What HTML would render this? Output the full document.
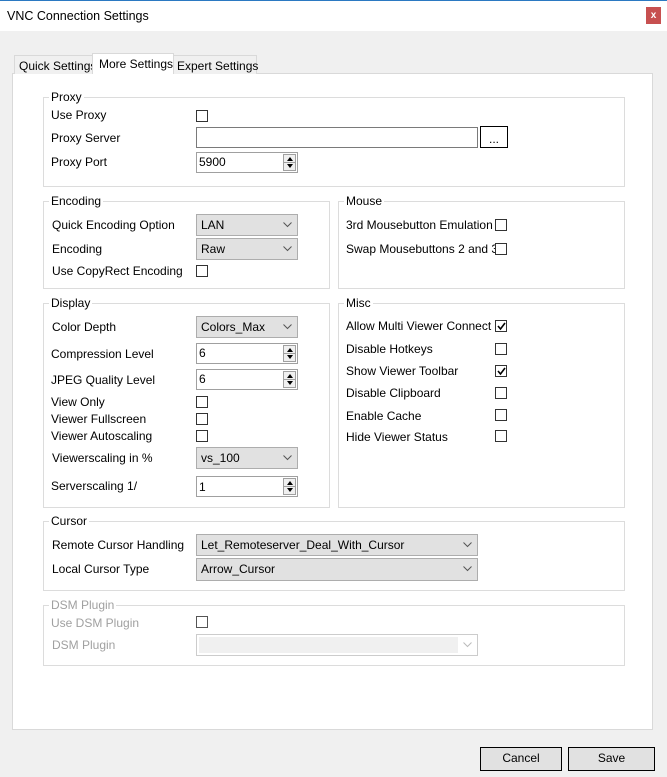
<!DOCTYPE html><html><head><style>
*{box-sizing:border-box;margin:0;padding:0}
body{width:667px;height:777px;background:#f0f0f0;font:12px "Liberation Sans",sans-serif;color:#000;position:relative;overflow:hidden}
.a{position:absolute}
.t{position:absolute;white-space:nowrap;line-height:14px}
.g{position:absolute;border:1px solid #dcdcdc}
.gl{position:absolute;background:#fff;padding:0 2px;line-height:14px;top:-8px;left:5px}
.cb{position:absolute;width:12px;height:12px;border:1px solid #333;background:#fff}
.cb svg{position:absolute;left:0;top:0}
.cmb{position:absolute;background:#e1e1e1;border:1px solid #adadad;padding:3px 0 0 4px;line-height:14px}
.cmb svg{position:absolute;right:5px;top:7px}
.sp{position:absolute;background:#fff;border:1px solid #a0a0a0;padding:2px 0 0 2px;line-height:14px}
.sp i{position:absolute;right:1px;top:1px;width:13px;height:17px;border:1px solid #a0a0a0;background:#f0f0f0}
.sp i:before{content:"";position:absolute;left:3px;top:2px;border:3px solid transparent;border-top:0;border-bottom:4px solid #000}
.sp i:after{content:"";position:absolute;left:3px;top:9px;border:3px solid transparent;border-bottom:0;border-top:4px solid #000}
.sp i b{position:absolute;left:0;right:0;top:7px;border-top:1px solid #a0a0a0}
.btn{position:absolute;border:1px solid #000;background:#e1e1e1;text-align:center;line-height:21px}
.dis{color:#a0a0a0}
</style></head><body>
<div class="a" style="left:0;top:0;width:667px;height:1px;background:#2b79c2"></div>
<div class="a" style="left:0;top:1px;width:667px;height:30px;background:#fff"></div>
<div class="t" style="left:7px;top:9px;font-size:12.5px">VNC Connection Settings</div>
<div class="a" style="left:646px;top:7px;width:15px;height:17px;background:#c75050;color:#fff;font-size:10px;font-weight:bold;text-align:center;line-height:17px">x</div>

<div class="a" style="left:12px;top:73px;width:641px;height:657px;background:#fff;border:1px solid #d9d9d9"></div>
<div class="a" style="left:14px;top:55px;width:79px;height:19px;background:#f0f0f0;border:1px solid #d9d9d9;border-bottom:0"></div>
<div class="t" style="left:19px;top:59px">Quick Settings</div>
<div class="a" style="left:92px;top:53px;width:82px;height:21px;background:#fff;border:1px solid #d9d9d9;border-bottom:0"></div>
<div class="t" style="left:99px;top:57px">More Settings</div>
<div class="a" style="left:173px;top:55px;width:84px;height:19px;background:#f0f0f0;border:1px solid #d9d9d9;border-bottom:0"></div>
<div class="t" style="left:177px;top:59px">Expert Settings</div>

<!-- Proxy -->
<div class="g" style="left:43px;top:97px;width:582px;height:90px"><span class="gl">Proxy</span></div>
<div class="t" style="left:51px;top:108px">Use Proxy</div><div class="cb" style="left:196px;top:110px"></div>
<div class="t" style="left:51px;top:131px">Proxy Server</div>
<div class="a" style="left:196px;top:127px;width:282px;height:21px;border:1px solid #7a7a7a;background:#fff"></div>
<div class="btn" style="left:480px;top:126px;width:28px;height:22px;line-height:24px;background:#fff">...</div>
<div class="t" style="left:51px;top:155px">Proxy Port</div>
<div class="sp" style="left:196px;top:152px;width:102px;height:21px">5900<i><b></b></i></div>

<!-- Encoding -->
<div class="g" style="left:43px;top:201px;width:287px;height:88px"><span class="gl">Encoding</span></div>
<div class="t" style="left:52px;top:218px">Quick Encoding Option</div>
<div class="cmb" style="left:196px;top:214px;width:102px;height:22px">LAN<svg width="9" height="6"><path d="M0.5 0.5L4.5 4.5L8.5 0.5" fill="none" stroke="#555"/></svg></div>
<div class="t" style="left:52px;top:242px">Encoding</div>
<div class="cmb" style="left:196px;top:238px;width:102px;height:22px">Raw<svg width="9" height="6"><path d="M0.5 0.5L4.5 4.5L8.5 0.5" fill="none" stroke="#555"/></svg></div>
<div class="t" style="left:52px;top:264px">Use CopyRect Encoding</div><div class="cb" style="left:196px;top:265px"></div>

<!-- Mouse -->
<div class="g" style="left:338px;top:201px;width:287px;height:88px"><span class="gl">Mouse</span></div>
<div class="t" style="left:346px;top:218px">3rd Mousebutton Emulation</div><div class="cb" style="left:495px;top:219px"></div>
<div class="t" style="left:346px;top:242px">Swap Mousebuttons 2 and 3</div><div class="cb" style="left:495px;top:243px"></div>

<!-- Display -->
<div class="g" style="left:43px;top:303px;width:287px;height:205px"><span class="gl">Display</span></div>
<div class="t" style="left:52px;top:320px">Color Depth</div>
<div class="cmb" style="left:196px;top:316px;width:102px;height:22px">Colors_Max<svg width="9" height="6"><path d="M0.5 0.5L4.5 4.5L8.5 0.5" fill="none" stroke="#555"/></svg></div>
<div class="t" style="left:51px;top:347px">Compression Level</div>
<div class="sp" style="left:196px;top:343px;width:102px;height:21px">6<i><b></b></i></div>
<div class="t" style="left:51px;top:373px">JPEG Quality Level</div>
<div class="sp" style="left:196px;top:369px;width:102px;height:21px">6<i><b></b></i></div>
<div class="t" style="left:51px;top:395px">View Only</div><div class="cb" style="left:196px;top:396px"></div>
<div class="t" style="left:51px;top:412px">Viewer Fullscreen</div><div class="cb" style="left:196px;top:413px"></div>
<div class="t" style="left:51px;top:429px">Viewer Autoscaling</div><div class="cb" style="left:196px;top:430px"></div>
<div class="t" style="left:52px;top:451px">Viewerscaling in %</div>
<div class="cmb" style="left:196px;top:447px;width:102px;height:22px">vs_100<svg width="9" height="6"><path d="M0.5 0.5L4.5 4.5L8.5 0.5" fill="none" stroke="#555"/></svg></div>
<div class="t" style="left:51px;top:479px">Serverscaling 1/</div>
<div class="sp" style="left:196px;top:476px;width:102px;height:21px;padding-top:3px">1<i><b></b></i></div>

<!-- Misc -->
<div class="g" style="left:338px;top:303px;width:287px;height:205px"><span class="gl">Misc</span></div>
<div class="t" style="left:346px;top:319px">Allow Multi Viewer Connect</div><div class="cb" style="left:495px;top:320px"><svg width="11" height="11"><path d="M2 5L4.5 8L9 2" fill="none" stroke="#000" stroke-width="1.6"/></svg></div>
<div class="t" style="left:346px;top:342px">Disable Hotkeys</div><div class="cb" style="left:495px;top:343px"></div>
<div class="t" style="left:346px;top:364px">Show Viewer Toolbar</div><div class="cb" style="left:495px;top:365px"><svg width="11" height="11"><path d="M2 5L4.5 8L9 2" fill="none" stroke="#000" stroke-width="1.6"/></svg></div>
<div class="t" style="left:346px;top:386px">Disable Clipboard</div><div class="cb" style="left:495px;top:387px"></div>
<div class="t" style="left:346px;top:409px">Enable Cache</div><div class="cb" style="left:495px;top:409px"></div>
<div class="t" style="left:346px;top:430px">Hide Viewer Status</div><div class="cb" style="left:495px;top:430px"></div>

<!-- Cursor -->
<div class="g" style="left:43px;top:521px;width:582px;height:70px"><span class="gl">Cursor</span></div>
<div class="t" style="left:52px;top:538px">Remote Cursor Handling</div>
<div class="cmb" style="left:196px;top:534px;width:282px;height:22px">Let_Remoteserver_Deal_With_Cursor<svg width="9" height="6"><path d="M0.5 0.5L4.5 4.5L8.5 0.5" fill="none" stroke="#555"/></svg></div>
<div class="t" style="left:52px;top:562px">Local Cursor Type</div>
<div class="cmb" style="left:196px;top:558px;width:282px;height:23px">Arrow_Cursor<svg width="9" height="6"><path d="M0.5 0.5L4.5 4.5L8.5 0.5" fill="none" stroke="#555"/></svg></div>

<!-- DSM -->
<div class="g" style="left:43px;top:605px;width:582px;height:61px"><span class="gl dis">DSM Plugin</span></div>
<div class="t dis" style="left:51px;top:616px">Use DSM Plugin</div><div class="cb" style="left:196px;top:616px;border-color:#555"></div>
<div class="t dis" style="left:52px;top:638px">DSM Plugin</div>
<div class="a" style="left:196px;top:634px;width:282px;height:22px;border:1px solid #ccc;background:#fff"><div class="a" style="left:2px;top:2px;width:259px;height:16px;background:#f0f0f0"></div><svg class="a" style="right:5px;top:7px" width="9" height="6"><path d="M0.5 0.5L4.5 4.5L8.5 0.5" fill="none" stroke="#bbb"/></svg></div>

<div class="btn" style="left:480px;top:747px;width:82px;height:24px">Cancel</div>
<div class="btn" style="left:568px;top:747px;width:87px;height:24px">Save</div>
</body></html>
